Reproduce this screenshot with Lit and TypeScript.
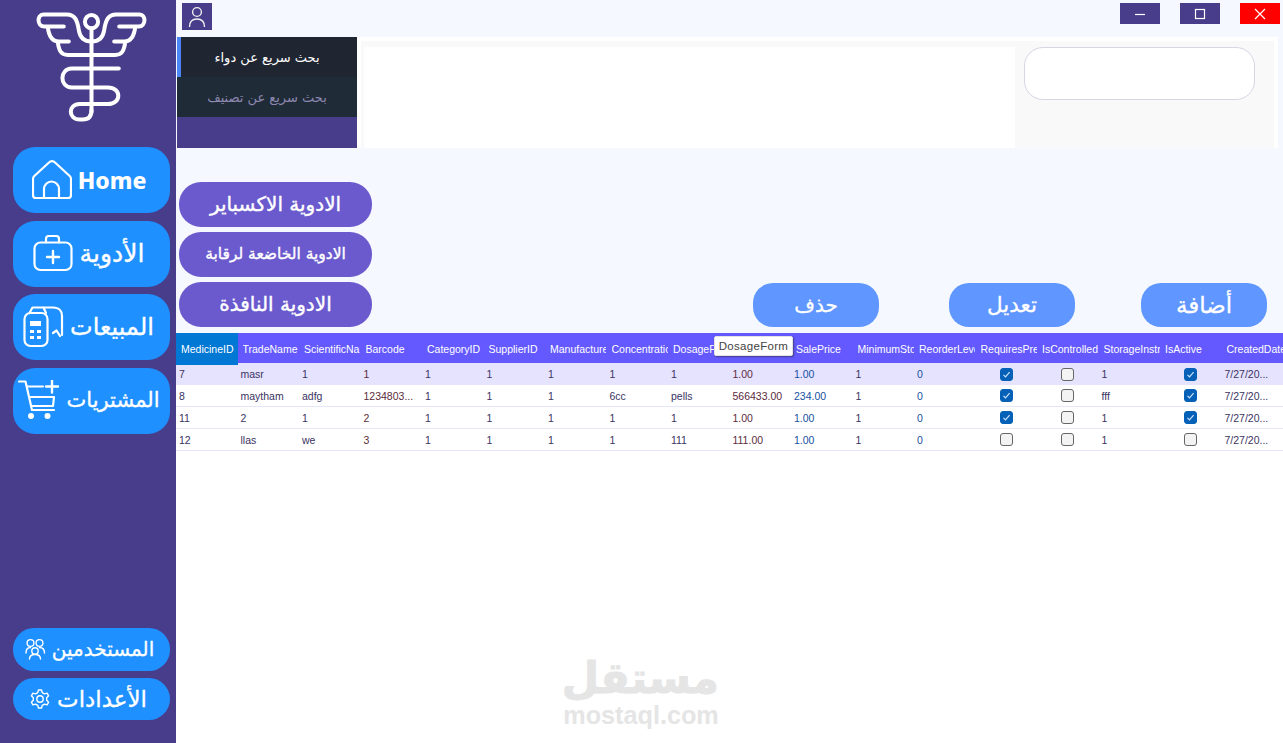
import { LitElement, html, css, svg } from "lit";
import { customElement } from "lit/decorators.js";

const COLS = ["MedicineID","TradeName","ScientificName","Barcode","CategoryID","SupplierID","Manufacturer","Concentration","DosageForm","PurchasePrice","SalePrice","MinimumStock","ReorderLevel","RequiresPrescription","IsControlled","StorageInstructions","IsActive","CreatedDate"];
type Row = { id: string; name: string; sci: string; bar: string; conc: string; form: string; buy: string; sale: string; rx: boolean; ctl: boolean; store: string; active: boolean };
const ROWS: Row[] = [
  { id: "7", name: "masr", sci: "1", bar: "1", conc: "1", form: "1", buy: "1.00", sale: "1.00", rx: true, ctl: false, store: "1", active: true },
  { id: "8", name: "maytham", sci: "adfg", bar: "1234803...", conc: "6cc", form: "pells", buy: "566433.00", sale: "234.00", rx: true, ctl: false, store: "fff", active: true },
  { id: "11", name: "2", sci: "1", bar: "2", conc: "1", form: "1", buy: "1.00", sale: "1.00", rx: true, ctl: false, store: "1", active: true },
  { id: "12", name: "llas", sci: "we", bar: "3", conc: "1", form: "111", buy: "111.00", sale: "1.00", rx: false, ctl: false, store: "1", active: false },
];

function gearPath(cx: number, cy: number, ro: number, ri: number, teeth: number) {
  const pts: string[] = [];
  const step = (Math.PI * 2) / teeth;
  for (let i = 0; i < teeth; i++) {
    const a = i * step - Math.PI / 2;
    const p = (r: number, t: number) => `${(cx + r * Math.cos(t)).toFixed(2)} ${(cy + r * Math.sin(t)).toFixed(2)}`;
    pts.push(`${i ? "L" : "M"}${p(ri, a - step * 0.32)}`, `L${p(ro, a - step * 0.16)}`, `L${p(ro, a + step * 0.16)}`, `L${p(ri, a + step * 0.32)}`);
  }
  return pts.join(" ") + "Z";
}

const wing = svg`
  <path d="M90.7 41.5C83 41.5 79 37 78 30C76.5 20 74 14.5 66 14.5H42.5C36 14.5 36 26.5 43.5 26.5H63"/>
  <path d="M47 27C48 36 51 41.5 58 41.5H68"/>
  <path d="M57 42C58 50 60 55 67 55H90.7"/>`;

@customElement("app-root")
export class AppRoot extends LitElement {
  static styles = css`
    :host { display: block; width: 1283px; height: 743px; overflow: hidden; position: relative; background: #f5f8ff; font-family: "DejaVu Sans", sans-serif; }
    .shell { display: flex; height: 743px; }
    .side { width: 176px; flex: none; background: #483d8b; display: flex; flex-direction: column; align-items: flex-start; padding-bottom: 23px; box-sizing: border-box; }
    .logo { width: 176px; height: 147px; flex: none; display: block; }
    .logo * { fill: none; stroke: #fff; stroke-width: 4; stroke-linecap: round; }
    .nav { display: flex; flex-direction: column; gap: 7.5px; margin-left: 12.5px; }
    .navbtn { width: 157px; height: 66px; border-radius: 22px; background: #1e90ff; color: #fff; display: flex; align-items: center; justify-content: center; box-sizing: border-box; }
    .navbtn svg, .small svg { fill: none; stroke: #fff; stroke-width: 2.2; stroke-linecap: round; stroke-linejoin: round; flex: none; }
    .navbtn .dot { fill: #fff; stroke: none; }
    .home { gap: 6px; padding-right: 4px; font: 800 23px "Noto Sans", sans-serif; }
    .ar { font-family: "DejaVu Sans", sans-serif; line-height: 1; -webkit-text-stroke: .35px #fff; }
    .meds { gap: 7px; padding-right: 5px; }
    .meds .ar { font-size: 25px; }
    .sales { gap: 5px; padding-right: 5px; }
    .sales .ar { font-size: 24px; }
    .buys { gap: 6px; padding-right: 4px; }
    .buys .ar { font-size: 21px; }
    .spacer { flex: 1; }
    .bottom { display: flex; flex-direction: column; gap: 7px; margin-left: 12.5px; }
    .small { width: 157px; height: 42.5px; border-radius: 21px; background: #1e90ff; color: #fff; display: flex; align-items: center; justify-content: center; gap: 6px; font-size: 20px; box-sizing: border-box; padding-right: 3px; -webkit-text-stroke: .3px #fff; }
    .small svg { stroke-width: 1.4; }
    .small.gear { font-size: 23px; gap: 7px; padding-right: 5px; }

    .main { flex: 1; min-width: 0; display: flex; flex-direction: column; }
    .titlebar { height: 37px; flex: none; display: flex; padding: 3px 3px 0 6px; box-sizing: border-box; }
    .user { width: 30px; height: 27px; background: #483d8b; display: flex; align-items: center; justify-content: center; }
    .user svg { fill: none; stroke: #eee; stroke-width: 1.4; }
    .winbtns { margin-left: auto; display: flex; gap: 20px; }
    .win { width: 40px; height: 21px; background: #483d8b; display: flex; align-items: center; justify-content: center; }
    .win svg { fill: none; stroke: #fff; stroke-width: 1.2; }
    .win.close { background: #ff0000; }

    .panel { height: 111px; flex: none; display: flex; margin-left: 1px; margin-right: 5px; background: #fff; }
    .menu { width: 180px; flex: none; background: #483d8b; display: flex; flex-direction: column; }
    .tab { height: 40px; display: flex; align-items: center; justify-content: center; font-size: 13px; box-sizing: border-box; }
    .tab.on { background: #1f2632; color: #fff; box-shadow: inset 4px 0 #4a86f7; }
    .tab.off { background: #202b38; color: #8d88b0; }
    .inner { flex: 1; margin: 4px 4px 0 4px; background: #f9f9f9; display: flex; padding-top: 6px; padding-left: 3px; }
    .white { width: 651px; background: #fff; flex: none; }
    .searchwrap { padding-left: 9px; }
    .search { width: 231px; height: 53px; box-sizing: border-box; background: #fff; border: 1px solid #d8d5e5; border-radius: 19px; }

    .actions { height: 185px; flex: none; display: flex; align-items: flex-end; padding-bottom: 6.5px; box-sizing: border-box; }
    .stack { margin-left: 3px; width: 193px; display: flex; flex-direction: column; gap: 5.5px; }
    .pill { background: #6a5acd; color: #fff; border-radius: 22px; height: 44.5px; display: flex; align-items: center; justify-content: center; font-size: 20px; -webkit-text-stroke: .4px #fff; }
    .pill.mid { font-size: 15.5px; }
    .btn { width: 126px; height: 44px; border-radius: 20px; background: #5f96ff; color: #fff; display: flex; align-items: center; justify-content: center; -webkit-text-stroke: .3px #fff; }
    .b1 { margin-left: 381px; font-size: 20px; }
    .b2 { margin-left: 70px; font-size: 21.5px; }
    .b3 { margin-left: 66px; font-size: 23px; }

    .table { font-family: "Liberation Sans", Arial, sans-serif; flex: 1; background: #fff; }
    .tr { display: grid; grid-template-columns: repeat(18, 61.5px); }
    .head { height: 30px; background: #6459ff; color: #fff; font-size: 10.5px; }
    .th { padding-left: 5px; white-space: nowrap; line-height: 32px; min-width: 0; }
    .th span { display: block; overflow: hidden; margin-right: .5px; }
    .th.first { background: #0078d4; }
    .row { height: 22px; box-sizing: border-box; border-bottom: 1px solid #e6e6fa; background: #fff; color: #3a3362; font-size: 10.5px; }
    .row.sel { background: #e6e3ff; border-bottom: none; }
    .td { padding-left: 3px; line-height: 22px; white-space: nowrap; overflow: hidden; min-width: 0; }
    .blue { color: #17509f; }
    .brown { color: #5b2c3c; }
    .chk { display: flex; align-items: center; justify-content: center; padding-left: 0; }
    .box { width: 13px; height: 13px; box-sizing: border-box; border-radius: 3px; background: #f3f3f3; border: 1px solid #666; display: block; }
    .box.on { background: #0560b8; border-color: #0560b8; }
    .box svg { display: block; fill: none; stroke: #cfe2ff; stroke-width: 1.2; }

    .tip { position: absolute; left: 714px; top: 336px; width: 79px; height: 20px; box-sizing: border-box; background: #fff; border: 1px solid #e2e2e2; border-radius: 2px; box-shadow: 1px 1px 2px rgba(40,40,40,.55); color: #444; font: 11.5px/18px "Liberation Sans", sans-serif; letter-spacing: .3px; text-align: center; }
    .mark { position: absolute; left: 563px; top: 649px; width: 156px; text-align: center; color: #e5e5e5; pointer-events: none; }
    .mark .a { font: 700 43px/58px "DejaVu Sans", sans-serif; -webkit-text-stroke: 1px #e5e5e5; }
    .mark .l { font: 700 25.2px/26px "Liberation Sans", sans-serif; margin-top: -5px; }
  `;

  private cell(content: unknown, cls = "") {
    return html`<div class="td ${cls}">${content}</div>`;
  }

  private box(on: boolean) {
    return html`<div class="td chk"><span class="box ${on ? "on" : ""}">${on
      ? html`<svg width="11" height="11" viewBox="0 0 11 11"><path d="M2.5 5.8 4.5 7.8 8.6 3.2"/></svg>`
      : ""}</span></div>`;
  }

  private renderRow(r: Row, i: number) {
    return html`<div class="tr row ${i === 0 ? "sel" : ""}">
      ${this.cell(r.id)}${this.cell(r.name)}${this.cell(r.sci)}${this.cell(r.bar, "brown")}
      ${this.cell("1")}${this.cell("1")}${this.cell("1")}${this.cell(r.conc)}${this.cell(r.form)}
      ${this.cell(r.buy, "brown")}${this.cell(r.sale, "blue")}${this.cell("1")}${this.cell("0", "blue")}
      ${this.box(r.rx)}${this.box(r.ctl)}${this.cell(r.store)}${this.box(r.active)}${this.cell("7/27/20...")}
    </div>`;
  }

  render() {
    return html`
      <div class="shell">
        <aside class="side">
          <svg class="logo" viewBox="-0.8 0 176 147">
            <circle cx="90.7" cy="21.7" r="6.6"/>
            <path d="M90.7 28.5V112"/>
            ${wing}
            <g transform="translate(181.4 0) scale(-1 1)">${wing}</g>
            <path d="M118 68.5H71C58.5 68.5 58.5 87.5 71 87.5H107C121 87.5 121 104 107 104H79C67 104 67 119.5 79 119.5H82C88 119.5 90.7 116 90.7 110"/>
          </svg>
          <div class="nav">
            <div class="navbtn home">
              <svg width="40" height="40" viewBox="31 160 40 40"><path d="M35 198H67a3 3 0 0 0 3-3V179a4 4 0 0 0-1.3-3L54 162.5a4 4 0 0 0-6 0L33.3 176a4 4 0 0 0-1.3 3V195a3 3 0 0 0 3 3Z"/><path d="M43 197.5V189a7.5 7.5 0 0 1 15 0V197.5"/></svg>
              <span>Home</span>
            </div>
            <div class="navbtn meds">
              <svg width="40" height="37" viewBox="32 235.5 40 37"><rect x="33.5" y="243" width="37" height="27.5" rx="6"/><path d="M45 243V239.5a3 3 0 0 1 3-3H55a3 3 0 0 1 3 3V243"/><path d="M52 251.5V263.5M46 257.5H58" stroke-width="2.4"/></svg>
              <span class="ar" dir="rtl">الأدوية</span>
            </div>
            <div class="navbtn sales">
              <svg width="42" height="42" viewBox="22 306 42 42"><rect x="23.5" y="313" width="23" height="33" rx="6"/><path d="M28.5 313L31.5 307.5H42.5L45 313"/><path d="M43 307.5H52C58 307.5 61 311 61 316V335M52 333L55.5 330.5L59 336"/><path class="dot" d="M29 321H40V326H29ZM29 330H33V333H29ZM36 330H40V333H36ZM29 336H33V339H29ZM36 336H40V339H36Z"/></svg>
              <span class="ar" dir="rtl">المبيعات</span>
            </div>
            <div class="navbtn buys">
              <svg width="42" height="42" viewBox="19 381 42 42"><path d="M20 382.5H26.5L33 411H55"/><path d="M28 387.5H44M30 398H55L54 407H33"/><path d="M53 381.5V393.5M47 387.5H59" stroke-width="2.4"/><circle class="dot" cx="32" cy="417" r="3"/><circle class="dot" cx="48.5" cy="417" r="3"/></svg>
              <span class="ar" dir="rtl">المشتريات</span>
            </div>
          </div>
          <div class="spacer"></div>
          <div class="bottom">
            <div class="small">
              <svg width="21" height="22" viewBox="23 639 21 22"><circle cx="28.5" cy="644" r="3.4"/><circle cx="37.5" cy="644" r="3.4"/><circle cx="33" cy="652" r="3.2"/><path d="M24 654C24 650 26 648.5 28.5 648.5M42.5 654C42.5 650 40.5 648.5 37.5 648.5M27.5 660C27.5 657 30 655.5 33 655.5S38.5 657 38.5 660"/></svg>
              <span dir="rtl">المستخدمين</span>
            </div>
            <div class="small gear">
              <svg width="20" height="20" viewBox="28 688 20 20"><path d="${gearPath(38, 698, 9.2, 6.8, 6)}"/><circle cx="38" cy="698" r="3.2"/></svg>
              <span dir="rtl">الأعدادات</span>
            </div>
          </div>
        </aside>

        <main class="main">
          <div class="titlebar">
            <div class="user"><svg width="18" height="22" viewBox="0 0 18 22"><circle cx="9" cy="6" r="4.4"/><path d="M1.5 21C1.5 15.5 4.5 13 9 13S16.5 15.5 16.5 21"/></svg></div>
            <div class="winbtns">
              <div class="win"><svg width="12" height="12" viewBox="0 0 12 12"><path d="M1 6.5H11"/></svg></div>
              <div class="win"><svg width="12" height="12" viewBox="0 0 12 12"><rect x="1.5" y="1.5" width="9" height="9"/></svg></div>
              <div class="win close"><svg width="12" height="12" viewBox="0 0 12 12"><path d="M1 1 11 11M11 1 1 11"/></svg></div>
            </div>
          </div>

          <section class="panel">
            <div class="menu">
              <div class="tab on" dir="rtl">بحث سريع عن دواء</div>
              <div class="tab off" dir="rtl">بحث سريع عن تصنيف</div>
            </div>
            <div class="inner">
              <div class="white"></div>
              <div class="searchwrap"><div class="search"></div></div>
            </div>
          </section>

          <section class="actions">
            <div class="stack">
              <div class="pill" dir="rtl">الادوية الاكسباير</div>
              <div class="pill mid" dir="rtl">الادوية الخاضعة لرقابة</div>
              <div class="pill" dir="rtl">الادوية النافذة</div>
            </div>
            <div class="btn b1" dir="rtl">حذف</div>
            <div class="btn b2" dir="rtl">تعديل</div>
            <div class="btn b3" dir="rtl">أضافة</div>
          </section>

          <section class="table">
            <div class="tr head">${COLS.map((c, i) => html`<div class="th ${i === 0 ? "first" : ""}"><span>${c}</span></div>`)}</div>
            ${ROWS.map((r, i) => this.renderRow(r, i))}
          </section>
        </main>
      </div>
      <div class="tip">DosageForm</div>
      <div class="mark"><div class="a" dir="rtl">مستقل</div><div class="l">mostaql.com</div></div>
    `;
  }
}
